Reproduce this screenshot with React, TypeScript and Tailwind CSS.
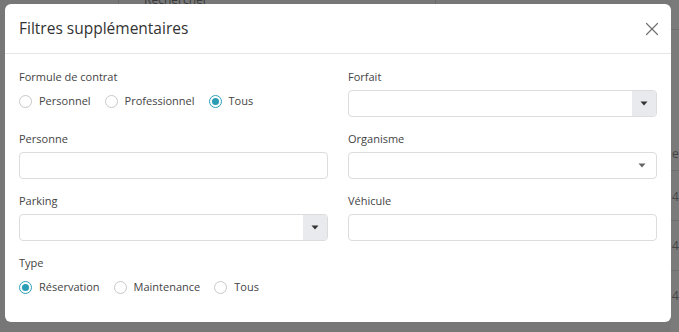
import { X } from 'lucide-react'

const font = { fontFamily: '"Open Sans", "Noto Sans", sans-serif' }

function Radio({ label, checked }: { label: string; checked?: boolean }) {
    return (
        <label className="flex items-center gap-[7px] text-[11px] text-[#444]">
            <span
                className={
                    checked
                        ? 'flex h-[13px] w-[13px] items-center justify-center rounded-full border border-[#2ba0b7] bg-white'
                        : 'h-[13px] w-[13px] rounded-full border border-[#c8c8c8] bg-white'
                }
            >
                {checked && <span className="h-[7px] w-[7px] rounded-full bg-[#2a9db4]"></span>}
            </span>
            {label}
        </label>
    )
}

function Caret({ className }: { className: string }) {
    return (
        <svg width="8" height="5" viewBox="0 0 8 5" className={className}>
            <path d="M0.5 0.5 L7.5 0.5 L4 4.5 Z" fill="currentColor" />
        </svg>
    )
}

function Field({ label, children }: { label: string; children: React.ReactNode }) {
    return (
        <div className="flex flex-col gap-[5px]">
            <div className="h-[16px] text-[11px] leading-[16px] text-[#444]">{label}</div>
            {children}
        </div>
    )
}

function TextInput() {
    return <div className="h-[27px] rounded-[4px] border border-[#dcdcdc] bg-white"></div>
}

function AddonSelect() {
    return (
        <div className="flex h-[27px] overflow-hidden rounded-[4px] border border-[#dcdcdc] bg-white">
            <div className="flex-1"></div>
            <div className="flex w-[24px] items-center justify-center bg-[#e8eaed]">
                <Caret className="text-[#333]" />
            </div>
        </div>
    )
}

function PlainSelect() {
    return (
        <div className="flex h-[27px] items-center justify-end rounded-[4px] border border-[#dcdcdc] bg-white pr-[10px]">
            <Caret className="text-[#666]" />
        </div>
    )
}

export default function App() {
    return (
        <div className="relative h-[332px] w-[679px] overflow-hidden bg-[#777777]" style={font}>
            {/* page behind the overlay */}
            <div className="absolute left-[118px] top-0 h-[4px] w-px bg-[#6a6a6a]"></div>
            <div className="absolute left-[435px] top-0 h-[4px] w-px bg-[#6a6a6a]"></div>
            <div className="absolute left-[144px] top-[-9px] whitespace-nowrap text-[12px] text-[#3a3a3a]">Rechercher</div>
            <div className="absolute left-[671px] top-[0px] h-[332px] w-[8px] bg-[#7b7b7b]"></div>
            <div className="absolute left-[671px] top-[29px] h-px w-[8px] bg-[#6e6e6e]"></div>
            <div className="absolute left-[671px] top-[170px] h-px w-[8px] bg-[#6e6e6e]"></div>
            <div className="absolute left-[671px] top-[220px] h-px w-[8px] bg-[#6e6e6e]"></div>
            <div className="absolute left-[671px] top-[270px] h-px w-[8px] bg-[#6e6e6e]"></div>
            <div className="absolute left-[672px] top-[145px] whitespace-nowrap text-[12px] text-[#444]">e c</div>
            <div className="absolute left-[672px] top-[188px] whitespace-nowrap text-[12px] text-[#444]">4/</div>
            <div className="absolute left-[672px] top-[237px] whitespace-nowrap text-[12px] text-[#444]">4/</div>
            <div className="absolute left-[672px] top-[287px] whitespace-nowrap text-[12px] text-[#444]">4/</div>

            {/* modal */}
            <div className="absolute left-[5px] top-[4px] flex h-[318px] w-[666px] flex-col rounded-[6px] bg-white">
                <div className="flex h-[50px] items-center justify-between border-b border-[#e6e6e6] pl-[14px] pr-[8px]">
                    <h2 className="text-[15.5px] text-[#333]">Filtres supplémentaires</h2>
                    <X size={22} strokeWidth={1.3} className="text-[#6f6f6f]" />
                </div>
                <div className="grid grid-cols-2 gap-x-[20px] gap-y-[14px] px-[14px] pt-[15px]">
                    <Field label="Formule de contrat">
                        <div className="mt-[2px] flex h-[18px] items-center gap-[14px]">
                            <Radio label="Personnel" />
                            <Radio label="Professionnel" />
                            <Radio label="Tous" checked />
                        </div>
                    </Field>
                    <Field label="Forfait">
                        <AddonSelect />
                    </Field>
                    <Field label="Personne">
                        <TextInput />
                    </Field>
                    <Field label="Organisme">
                        <PlainSelect />
                    </Field>
                    <Field label="Parking">
                        <AddonSelect />
                    </Field>
                    <Field label="Véhicule">
                        <TextInput />
                    </Field>
                    <Field label="Type">
                        <div className="mt-[2px] flex h-[18px] items-center gap-[14px]">
                            <Radio label="Réservation" checked />
                            <Radio label="Maintenance" />
                            <Radio label="Tous" />
                        </div>
                    </Field>
                </div>
            </div>
        </div>
    )
}
